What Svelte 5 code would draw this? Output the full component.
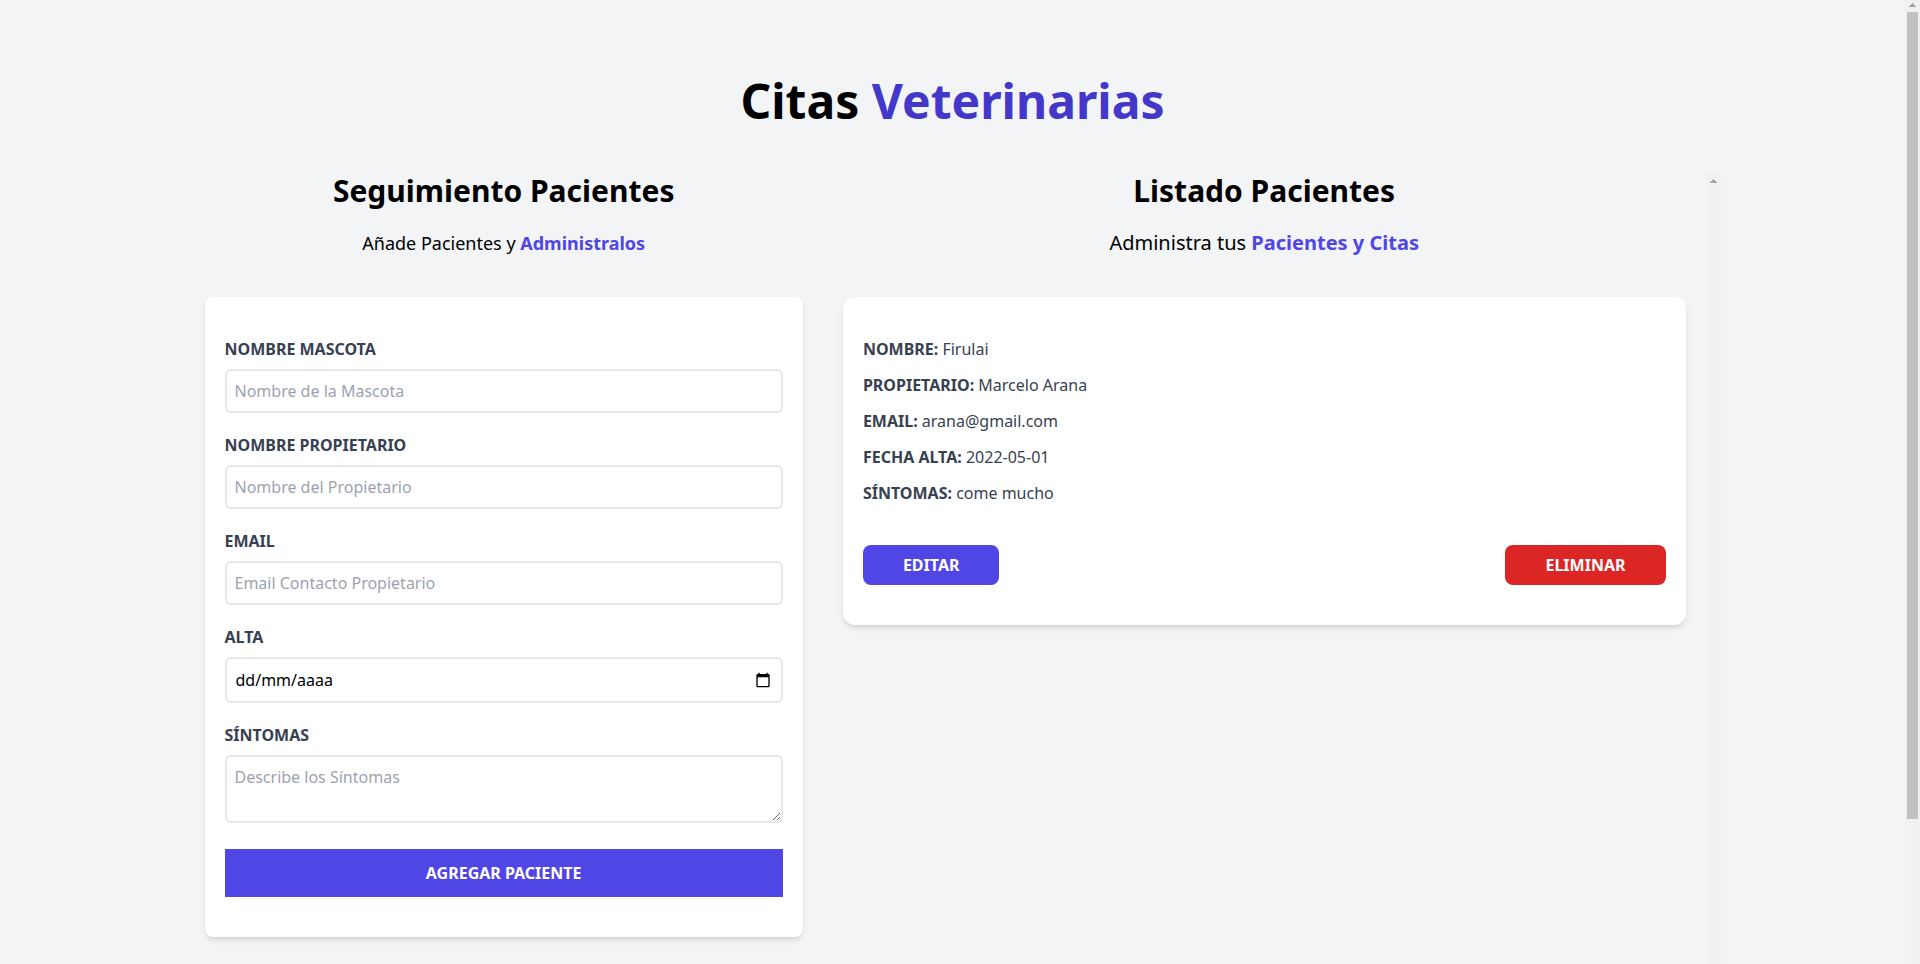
<script>
  let form = $state({ mascota: '', propietario: '', email: '', alta: '', sintomas: '' });

  let pacientes = $state([
    {
      id: 1,
      mascota: 'Firulai',
      propietario: 'Marcelo Arana',
      email: 'arana@gmail.com',
      alta: '2022-05-01',
      sintomas: 'come mucho'
    }
  ]);

  function guardar(e) {
    e.preventDefault();
    if (Object.values(form).some((v) => v === '')) return;
    pacientes.push({ id: Date.now(), ...form });
    form = { mascota: '', propietario: '', email: '', alta: '', sintomas: '' };
  }

  function editar(p) {
    const { id, ...datos } = p;
    form = datos;
  }

  function eliminar(id) {
    pacientes = pacientes.filter((p) => p.id !== id);
  }
</script>

{#snippet flecha()}
  <svg class="arrow" width="7" height="4" viewBox="0 0 7 4" shape-rendering="crispEdges" aria-hidden="true">
    <path d="M3 0h1v1h1v1h1v1h1v1H0V3h1V2h1V1h1z" />
  </svg>
{/snippet}

<div class="page">
  <div class="container">
    <h1>Citas <span>Veterinarias</span></h1>

    <main class="columns">
      <section class="form-column">
        <h2>Seguimiento Pacientes</h2>
        <p class="lead">Añade Pacientes y <span>Administralos</span></p>

        <form class="card" onsubmit={guardar}>
          <div class="field">
            <label for="mascota">Nombre Mascota</label>
            <input id="mascota" type="text" placeholder="Nombre de la Mascota" bind:value={form.mascota} />
          </div>
          <div class="field">
            <label for="propietario">Nombre Propietario</label>
            <input id="propietario" type="text" placeholder="Nombre del Propietario" bind:value={form.propietario} />
          </div>
          <div class="field">
            <label for="email">Email</label>
            <input id="email" type="email" placeholder="Email Contacto Propietario" bind:value={form.email} />
          </div>
          <div class="field">
            <label for="alta">Alta</label>
            <div class="date">
              <input id="alta" type="text" placeholder="dd/mm/aaaa" bind:value={form.alta} />
              <button type="button" class="picker" aria-label="Abrir calendario">
                <svg width="16" height="16" viewBox="0 0 24 24" aria-hidden="true">
                  <path d="M20 3h-1V1h-2v2H7V1H5v2H4c-1.1 0-2 .9-2 2v16c0 1.1.9 2 2 2h16c1.100 0 2-.9 2-2V5c0-1.100-.9-2-2-2zm0 18H4V8h16v13z" />
                </svg>
              </button>
            </div>
          </div>
          <div class="field last">
            <label for="sintomas">Síntomas</label>
            <textarea id="sintomas" rows="2" placeholder="Describe los Síntomas" bind:value={form.sintomas}></textarea>
          </div>
          <button type="submit" class="submit">Agregar Paciente</button>
        </form>
      </section>

      <section class="list-column">
        <div class="list">
          <h2>Listado Pacientes</h2>
          <p class="lead large">Administra tus <span>Pacientes y Citas</span></p>

          {#each pacientes as p (p.id)}
            <article class="card patient">
              <p><b>Nombre:</b> {p.mascota}</p>
              <p><b>Propietario:</b> {p.propietario}</p>
              <p><b>Email:</b> {p.email}</p>
              <p><b>Fecha Alta:</b> {p.alta}</p>
              <p><b>Síntomas:</b> {p.sintomas}</p>
              <div class="actions">
                <button type="button" class="edit" onclick={() => editar(p)}>Editar</button>
                <button type="button" class="delete" onclick={() => eliminar(p.id)}>Eliminar</button>
              </div>
            </article>
          {/each}
        </div>
        <div class="rail list-rail">{@render flecha()}</div>
      </section>
    </main>
  </div>

  <div class="rail page-rail">
    {@render flecha()}
    <div class="thumb"></div>
  </div>
</div>

<style>
  :global(body) {
    margin: 0;
    background: #f3f4f6;
  }

  .page,
  .page * {
    box-sizing: border-box;
  }

  .page {
    display: flex;
    height: 100vh;
    overflow: hidden;
    font-family: 'Noto Sans', sans-serif;
    font-size: 16px;
    line-height: 24px;
    color: #000;
    background: #f3f4f6;
  }

  .container {
    flex: 0 1 1536px;
    display: flex;
    flex-direction: column;
    min-width: 0;
    margin: 0 auto;
    padding-top: 77px;
  }

  h1,
  h2,
  p {
    margin: 0;
  }

  h1 {
    font-size: 48px;
    line-height: 48px;
    font-weight: 700;
    text-align: center;
  }

  h1 span {
    color: #4338ca;
  }

  .columns {
    display: flex;
    flex: 1;
    margin-top: 48px;
  }

  .form-column {
    width: 40%;
    margin: 0 20px;
  }

  .list-column {
    display: flex;
    width: 60%;
  }

  .list {
    flex: 1;
    padding: 0 20px;
  }

  h2 {
    font-size: 30px;
    line-height: 36px;
    font-weight: 700;
    text-align: center;
  }

  .lead {
    margin: 20px 0 40px;
    font-size: 18px;
    line-height: 28px;
    text-align: center;
  }

  .lead.large {
    font-size: 20px;
  }

  .lead span {
    font-weight: 700;
    color: #4f46e5;
  }

  .card {
    padding: 40px 20px;
    background: #fff;
    border-radius: 8px;
    box-shadow:
      0 4px 6px -1px rgb(0 0 0 / 0.1),
      0 2px 4px -2px rgb(0 0 0 / 0.1);
  }

  .field {
    display: flex;
    flex-direction: column;
    gap: 8px;
    margin-bottom: 20px;
  }

  .field.last {
    margin-bottom: 26px;
  }

  label {
    font-weight: 700;
    text-transform: uppercase;
    color: #374151;
  }

  input,
  textarea {
    display: block;
    width: 100%;
    margin: 0;
    padding: 8px;
    border: 2px solid #e5e7eb;
    border-radius: 6px;
    background: #fff;
    font: inherit;
    color: #000;
  }

  input {
    height: 44px;
  }

  textarea {
    height: 68px;
    resize: vertical;
  }

  input::placeholder,
  textarea::placeholder {
    color: #9ca3af;
    opacity: 1;
  }

  .date {
    display: grid;
    align-items: center;
  }

  .date input {
    grid-area: 1 / 1;
    height: 46px;
    padding-left: 9px;
  }

  .date input::placeholder {
    color: #000;
  }

  .picker {
    grid-area: 1 / 1;
    justify-self: end;
    display: flex;
    margin-right: 12px;
    padding: 0;
    border: 0;
    background: none;
  }

  .submit,
  .edit,
  .delete {
    border: 0;
    font: inherit;
    font-weight: 700;
    text-transform: uppercase;
    color: #fff;
    background: #4f46e5;
    cursor: pointer;
  }

  .submit {
    display: block;
    width: 100%;
    padding: 12px;
  }

  .patient {
    border-radius: 12px;
    margin-bottom: 40px;
    color: #374151;
  }

  .patient p + p {
    margin-top: 12px;
  }

  .patient b {
    text-transform: uppercase;
  }

  .actions {
    display: flex;
    justify-content: space-between;
    margin-top: 40px;
  }

  .edit,
  .delete {
    padding: 8px 40px;
    border-radius: 8px;
  }

  .delete {
    background: #dc2626;
  }

  .rail {
    display: flex;
    flex: 0 0 15px;
    flex-direction: column;
    align-items: center;
    background: #f1f1f1;
  }

  .arrow {
    flex: none;
    fill: #a3a3a3;
  }

  .list-rail {
    padding-top: 6px;
  }

  .page-rail {
    padding-top: 3px;
  }

  .thumb {
    width: 11px;
    height: 84%;
    margin-top: 5px;
    background: #c1c1c1;
  }
</style>
